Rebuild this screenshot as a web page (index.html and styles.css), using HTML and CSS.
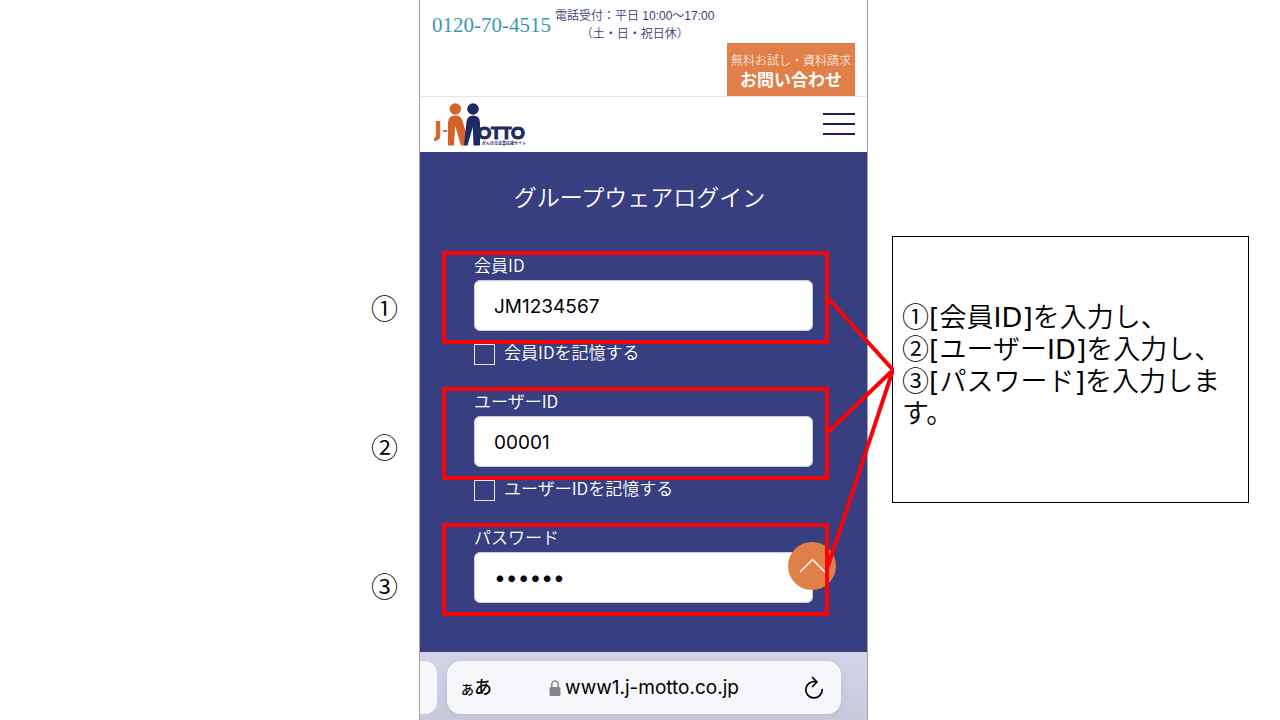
FILE: index.html
```
<!DOCTYPE html>
<html lang="ja">
  <head>
    <meta charset="UTF-8">
    <title>J-MOTTO グループウェアログイン</title>
    <meta name="viewport" content="width=device-width, initial-scale=1">
    <link rel="stylesheet" href="styles.css">
  </head>
  <body>
    <div class="slide">
      <div class="steps">
        <span>①</span>
        <span>②</span>
        <span>③</span>
      </div>

      <div class="phone" id="top">
        <header class="contact">
          <div class="contact-row">
            <a class="tel" href="tel:0120704515">0120-70-4515</a>
            <p class="hours">電話受付：平日 10:00〜17:00<br>（土・日・祝日休）</p>
          </div>
          <a class="inquiry" href="#inquiry">
            <span>無料お試し・資料請求</span>
            <strong>お問い合わせ</strong>
          </a>
        </header>

        <nav class="navbar">
          <a href="#top" aria-label="J-MOTTO">
            <svg class="logo" viewBox="0 0 92 44" width="92" height="44">
              <g class="logo-orange">
                <text class="logo-j" x="0" y="34">J</text>
                <text class="logo-dash" x="8.500" y="32">-</text>
                <circle cx="21.3" cy="6" r="5.8"/>
                <path d="M14 42.5V19.500q0-7 7.500-7q5.500 0 7 5.500L32.500 31L30.500 42.500H27L21.200 23L20 42.500z"/>
              </g>
              <g class="logo-navy">
                <circle cx="39" cy="6" r="5.8"/>
                <path d="M30 42.500L32.500 18.500q1-6 6.500-6q7 0 7 7V42.500H39.500L38.800 24L33.500 42.500z"/>
                <text class="logo-otto" x="43.500" y="35.500">OTTO</text>
                <text class="logo-sub" x="48" y="42">がんばる企業応援サイト</text>
              </g>
            </svg>
          </a>
          <button class="burger" type="button" aria-label="メニュー">
            <i></i><i></i><i></i>
          </button>
        </nav>

        <main class="login">
          <h1>グループウェアログイン</h1>
          <form>
            <div class="field">
              <label for="member">会員ID</label>
              <input id="member" type="text" value="JM1234567">
            </div>
            <label class="remember"><input type="checkbox">会員IDを記憶する</label>

            <div class="field">
              <label for="user">ユーザーID</label>
              <input id="user" type="text" value="00001">
            </div>
            <label class="remember"><input type="checkbox">ユーザーIDを記憶する</label>

            <div class="field">
              <label for="pass">パスワード</label>
              <input id="pass" type="password" value="123456">
              <a class="to-top" href="#top" aria-label="ページの先頭へ">
                <svg viewBox="0 0 48 48" width="48" height="48"><path d="M12 30L24.500 17.500L37 30"/></svg>
              </a>
            </div>
          </form>
        </main>

        <footer class="browser">
          <div class="prev-tab"></div>
          <div class="address">
            <span class="aa"><small>あ</small>あ</span>
            <span class="url">
              <svg viewBox="0 0 12 16" width="12" height="16">
                <rect x="0.500" y="7" width="11" height="9" rx="1.500" fill="#858589"/>
                <path d="M2.800 8V4.500a3.200 3.500 0 0 1 6.400 0V8" fill="none" stroke="#858589" stroke-width="1.500"/>
              </svg>
              www1.j-motto.co.jp
            </span>
            <button class="reload" type="button" aria-label="再読み込み">
              <svg viewBox="0 0 20 24" width="20" height="24">
                <path d="M12 5.800A8.200 8.200 0 1 0 18.200 13.500M8.500 1.500L13 6L8.500 10.500"/>
              </svg>
            </button>
          </div>
        </footer>
      </div>

      <div class="side">
        <svg class="arrows" viewBox="0 0 70 290" width="70" height="290">
          <path d="M3 7L69 80L3 143M69 80L3 279"/>
        </svg>
        <div class="note">①<span>[</span>会員<span>ID]</span>を入力し、<br>②<span>[</span>ユーザー<span>ID]</span>を入力し、<br>③<span>[</span>パスワード<span>]</span>を入力します。</div>
      </div>
    </div>
  </body>
</html>
```
FILE: styles.css
```
* {
  box-sizing: border-box;
}

body {
  margin: 0;
  background: #fff;
  color: #000;
  font-family: "Noto Sans CJK JP", sans-serif;
}

p, h1 {
  margin: 0;
}

a {
  color: inherit;
  text-decoration: none;
}

button {
  padding: 0;
  border: none;
  background: none;
}

svg {
  display: block;
}

.slide {
  display: grid;
  grid-template-columns: 419fr 449fr 412fr;
  min-height: 100vh;
}

/* step numbers */
.steps {
  display: flex;
  flex-direction: column;
  align-items: flex-end;
  gap: 107px;
  padding: 292px 21px 0 0;
  font-size: 27px;
  line-height: 32px;
  font-weight: 350;
}

/* phone */
.phone {
  display: flex;
  flex-direction: column;
  border: solid #a3a3a8;
  border-width: 0 1px;
}

.contact {
  display: flex;
  flex-direction: column;
  border-bottom: 1px solid #e6e6e8;
  color: #383d78;
}

.contact-row {
  display: flex;
  gap: 4px;
  height: 43px;
  padding: 7px 12px 0;
}

.tel {
  color: #3a96b8;
  font-family: "Liberation Serif", serif;
  font-size: 21px;
  line-height: 36px;
}

.hours {
  font-family: "Liberation Sans", "Noto Sans CJK JP", sans-serif;
  font-size: 12px;
  line-height: 18px;
  text-align: center;
  font-weight: 350;
}

.inquiry {
  display: flex;
  flex-direction: column;
  align-self: flex-end;
  align-items: center;
  margin-right: 12px;
  padding: 7px 4px 6px;
  background: #e08048;
  color: #fff;
  font-size: 12px;
  line-height: 20px;
  font-weight: 300;
}

.inquiry strong {
  padding-bottom: 2px;
  font-size: 17px;
  line-height: 18px;
  font-weight: 700;
}

.navbar {
  display: flex;
  justify-content: space-between;
  align-items: center;
  height: 55px;
  padding: 0 12px 0 14px;
}

.logo-orange {
  fill: #d4622c;
}

.logo-navy {
  fill: #1f2a64;
}

.logo-j {
  font: bold 22px "DejaVu Sans", sans-serif;
}

.logo-dash {
  font: bold 16px "Liberation Sans", sans-serif;
}

.logo-otto {
  font: 900 17px Lato, sans-serif;
  stroke: #1f2a64;
  stroke-width: 1;
}

.logo-sub {
  font: bold 4px "Noto Sans CJK JP", sans-serif;
}

.burger {
  display: flex;
  flex-direction: column;
  gap: 8px;
  width: 32px;
  margin-bottom: 2px;
}

.burger i {
  height: 2px;
  background: #1b2160;
}

/* login form */
.login {
  flex: 1;
  padding: 26px 38px 36px 22px;
  background: #373f80;
  color: #fff;
  font-weight: 350;
}

.login h1 {
  margin: 0 -8px 37px 0;
  font-size: 23px;
  line-height: 36px;
  font-weight: 350;
  text-align: center;
}

.field {
  position: relative;
  display: flex;
  flex-direction: column;
  gap: 5px;
  padding: 4px 16px 13px 32px;
  font-size: 17px;
  line-height: 20px;
}

/* red frame stays above the round button */
.field::after {
  content: "";
  position: absolute;
  inset: 0;
  border: 4px solid #f80408;
  pointer-events: none;
}

.field input {
  width: 100%;
  height: 51px;
  padding: 2px 19px 0;
  border: 1px solid #c9cbd8;
  border-radius: 6px;
  background: #fff;
  color: #000;
  font-family: Inter, sans-serif;
  font-size: 19px;
}

.field input[type="password"] {
  padding-top: 0;
  font-size: 21px;
}

.remember {
  display: flex;
  gap: 9px;
  height: 43px;
  padding-left: 32px;
  font-size: 17px;
  line-height: 16px;
}

.remember input {
  appearance: none;
  width: 21px;
  height: 21px;
  margin: 0;
  border: 1px solid #e4e5ef;
}

.to-top {
  position: absolute;
  top: 19px;
  right: -7px;
  border-radius: 50%;
  background: #e08048;
}

.to-top path {
  fill: none;
  stroke: #fff;
  stroke-width: 1.5;
}

/* browser bar */
.browser {
  display: flex;
  gap: 10px;
  height: 68px;
  padding: 9px 26px 6px 0;
  background: linear-gradient(#d2d5e8, #c8cadc);
}

.prev-tab {
  width: 17px;
  border-radius: 0 12px 12px 0;
  background: #f6f6fb;
}

.address {
  flex: 1;
  display: flex;
  justify-content: space-between;
  align-items: center;
  padding: 0 17px 0 14px;
  border-radius: 14px;
  background: #f6f6fb;
  box-shadow: 0 1px 8px rgba(90, 90, 130, 0.15);
}

.aa {
  font-size: 18px;
  line-height: 24px;
  font-weight: 500;
}

.aa small {
  font-size: 13px;
}

.url {
  display: flex;
  align-items: center;
  gap: 4px;
  margin-right: 8px;
  font-family: Inter, sans-serif;
  font-size: 19px;
}

.reload path {
  fill: none;
  stroke: #000;
  stroke-width: 1.7;
  stroke-linecap: round;
  stroke-linejoin: round;
}

/* explanation */
.side {
  position: relative;
  padding: 236px 31px 0 24px;
}

.arrows {
  position: absolute;
  top: 290px;
  left: -44px;
}

.arrows path {
  fill: none;
  stroke: #f80408;
  stroke-width: 4;
}

.note {
  padding: 65px 9px 72px;
  border: 1px solid #000;
  font-family: "Liberation Sans", "Noto Sans CJK JP", sans-serif;
  font-size: 27px;
  line-height: 32px;
  font-weight: 350;
}

.note span {
  font-family: "DejaVu Sans", sans-serif;
  font-weight: 400;
  line-height: 1;
}
```
